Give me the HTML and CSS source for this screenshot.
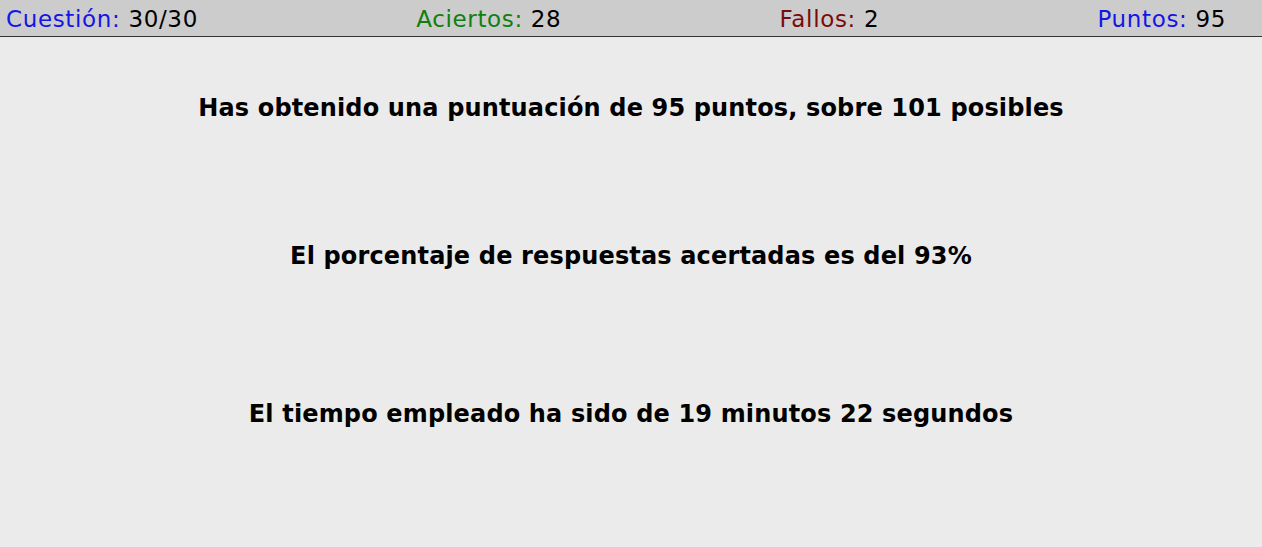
FILE: index.html
```html
<!DOCTYPE html>
<html lang="es">
<head>
<meta charset="utf-8">
<title>Resultados</title>
<link rel="stylesheet" href="styles.css">
</head>
<body>
<div class="bar">
  <span class="item"><span class="lbl blue">Cuestión:</span> 30/30</span>
  <span class="item"><span class="lbl green">Aciertos:</span> 28</span>
  <span class="item"><span class="lbl red">Fallos:</span> 2</span>
  <span class="item"><span class="lbl blue">Puntos:</span> 95</span>
</div>
<main class="results">
  <p class="line l1">Has obtenido una puntuación de 95 puntos, sobre 101 posibles</p>
  <p class="line l2">El porcentaje de respuestas acertadas es del 93%</p>
  <p class="line l3">El tiempo empleado ha sido de 19 minutos 22 segundos</p>
</main>
</body>
</html>
```
FILE: styles.css
```css
html, body {
  margin: 0;
  padding: 0;
}
body {
  background: #ebebeb;
  font-family: "DejaVu Sans", Verdana, sans-serif;
  color: #000;
  min-height: 547px;
}
.bar {
  display: flex;
  justify-content: space-between;
  height: 34px;
  line-height: 34px;
  padding: 2px 36px 0 6px;
  background: #cccccc;
  border-bottom: 1px solid #333;
  font-size: 23px;
  letter-spacing: 0.65px;
  white-space: nowrap;
}
.blue { color: #1515e6; }
.green { color: #0f7f0f; }
.red { color: #7a0a0a; }
.results {
  text-align: center;
}
.line {
  margin: 0;
  font-size: 24px;
  font-weight: bold;
  line-height: 28px;
  letter-spacing: 0.15px;
}
.l1 { padding-top: 57px; }
.l2 { padding-top: 120px; }
.l3 { padding-top: 130px; }
```
